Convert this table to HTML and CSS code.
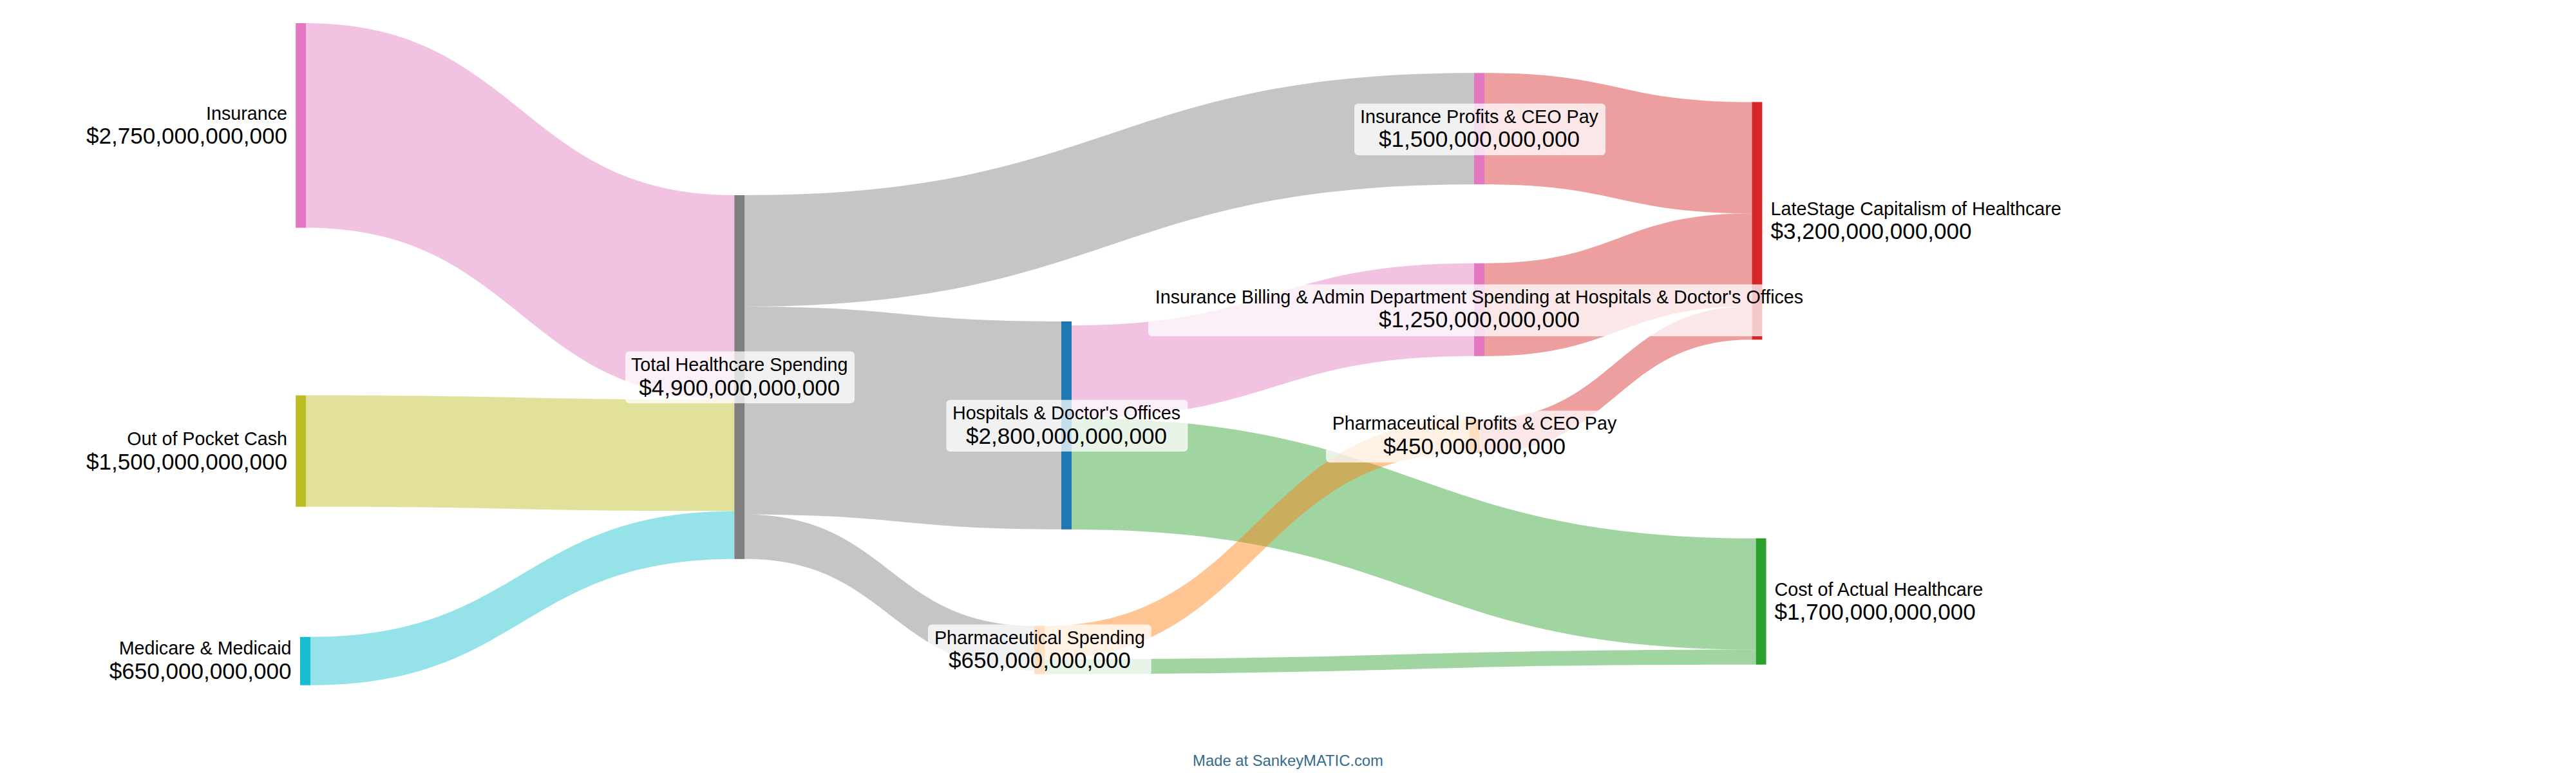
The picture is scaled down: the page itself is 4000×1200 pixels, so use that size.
FILE: index.html
```html
<!DOCTYPE html>
<html lang="en">
<head>
<meta charset="utf-8">
<title>Healthcare Spending Sankey</title>
<link rel="stylesheet" href="styles.css">
</head>
<body>
<div class="page">
  <svg class="sankey" width="4000" height="1161" viewBox="0 0 4000 1161" xmlns="http://www.w3.org/2000/svg">
    <g class="flows">
      <path class="flow pink" d="M475.2,36 C807.75,36 807.75,303 1140.3,303 L1140.3,620.6 C807.75,620.6 807.75,353.6 475.2,353.6 Z"/>
      <path class="flow olive" d="M475.2,613.8 C807.75,613.8 807.75,620.6 1140.3,620.6 L1140.3,793.5 C807.75,793.5 807.75,786.7 475.2,786.7 Z"/>
      <path class="flow cyan" d="M482,988.8 C811.15,988.8 811.15,793.5 1140.3,793.5 L1140.3,867.8 C811.15,867.8 811.15,1063.7 482,1063.7 Z"/>
      <path class="flow gray" d="M1156.3,303 C1722.65,303 1722.65,113.3 2289,113.3 L2289,286.2 C1722.65,286.2 1722.65,475.9 1156.3,475.9 Z"/>
      <path class="flow gray" d="M1156.3,475.9 C1402.15,475.9 1402.15,499 1648,499 L1648,821.8 C1402.15,821.8 1402.15,798.7 1156.3,798.7 Z"/>
      <path class="flow gray" d="M1156.3,798.7 C1381.15,798.7 1381.15,971.5 1606,971.5 L1606,1040.7 C1381.15,1040.7 1381.15,867.8 1156.3,867.8 Z"/>
      <path class="flow pink" d="M1664,505 C1976.5,505 1976.5,408.7 2289,408.7 L2289,552.8 C1976.5,552.8 1976.5,649.1 1664,649.1 Z"/>
      <path class="flow green" d="M1664,649.1 C2195.25,649.1 2195.25,835.7 2726.5,835.7 L2726.5,1008.6 C2195.25,1008.6 2195.25,822 1664,822 Z"/>
      <path class="flow orange" d="M1622,971.5 C1951.75,971.5 1951.75,651 2281.5,651 L2281.5,702.9 C1951.75,702.9 1951.75,1023.4 1622,1023.4 Z"/>
      <path class="flow green" d="M1622,1023.4 C2174.25,1023.4 2174.25,1008.6 2726.5,1008.6 L2726.5,1031.7 C2174.25,1031.7 2174.25,1046.4 1622,1046.4 Z"/>
      <path class="flow red" d="M2305,113.3 C2512.7,113.3 2512.7,158.4 2720.4,158.4 L2720.4,331.3 C2512.7,331.3 2512.7,286.2 2305,286.2 Z"/>
      <path class="flow red" d="M2305,408.7 C2512.7,408.7 2512.7,331.3 2720.4,331.3 L2720.4,475.4 C2512.7,475.4 2512.7,552.8 2305,552.8 Z"/>
      <path class="flow red" d="M2297.5,651 C2508.95,651 2508.95,475.4 2720.4,475.4 L2720.4,527.3 C2508.95,527.3 2508.95,702.9 2297.5,702.9 Z"/>
    </g>
    <g class="nodes">
      <rect class="node n-pink" x="459.2" y="36" width="16" height="317.6"/>
      <rect class="node n-olive" x="459.2" y="613.8" width="16" height="172.9"/>
      <rect class="node n-cyan" x="466" y="988.8" width="16" height="74.9"/>
      <rect class="node n-gray" x="1140.3" y="303" width="16" height="564.8"/>
      <rect class="node n-blue" x="1648" y="499" width="16" height="322.8"/>
      <rect class="node n-orange" x="1606" y="971.5" width="16" height="74.9"/>
      <rect class="node n-pink" x="2289" y="113.3" width="16" height="172.9"/>
      <rect class="node n-pink" x="2289" y="408.7" width="16" height="144.1"/>
      <rect class="node n-orange" x="2281.5" y="651" width="16" height="51.9"/>
      <rect class="node n-red" x="2720.4" y="158.4" width="16" height="368.9"/>
      <rect class="node n-green" x="2726.5" y="835.7" width="16" height="196"/>
    </g>
    <g class="labels">
      <text class="lbl end" x="446"><tspan class="name" x="446" y="185.8">Insurance</tspan><tspan class="value" x="446" y="223.3">$2,750,000,000,000</tspan></text>
      <text class="lbl end" x="446"><tspan class="name" x="446" y="691.2">Out of Pocket Cash</tspan><tspan class="value" x="446" y="728.7">$1,500,000,000,000</tspan></text>
      <text class="lbl end" x="452.5"><tspan class="name" x="452.5" y="1015.8">Medicare &amp; Medicaid</tspan><tspan class="value" x="452.5" y="1053.8">$650,000,000,000</tspan></text>

      <rect class="hl" x="971" y="545.6" width="356" height="80.4" rx="6"/>
      <text class="lbl mid"><tspan class="name" x="1148.3" y="576.3">Total Healthcare Spending</tspan><tspan class="value" x="1148.3" y="613.8">$4,900,000,000,000</tspan></text>

      <rect class="hl" x="1469.4" y="620.7" width="375" height="80.3" rx="6"/>
      <text class="lbl mid"><tspan class="name" x="1656" y="651.3">Hospitals &amp; Doctor's Offices</tspan><tspan class="value" x="1656" y="688.8">$2,800,000,000,000</tspan></text>

      <rect class="hl" x="1441" y="969.6" width="346.7" height="79.4" rx="6"/>
      <text class="lbl mid"><tspan class="name" x="1614.4" y="1000">Pharmaceutical Spending</tspan><tspan class="value" x="1614.4" y="1037">$650,000,000,000</tspan></text>

      <rect class="hl" x="2103" y="160.7" width="390" height="80.3" rx="6"/>
      <text class="lbl mid"><tspan class="name" x="2297" y="190.6">Insurance Profits &amp; CEO Pay</tspan><tspan class="value" x="2297" y="228">$1,500,000,000,000</tspan></text>

      <rect class="hl" x="1783" y="441.6" width="1029" height="80.4" rx="6"/>
      <text class="lbl mid"><tspan class="name" x="2297" y="470.7">Insurance Billing &amp; Admin Department Spending at Hospitals &amp; Doctor's Offices</tspan><tspan class="value" x="2297" y="507.8">$1,250,000,000,000</tspan></text>

      <rect class="hl" x="2059" y="637.5" width="461" height="80.4" rx="6"/>
      <text class="lbl mid"><tspan class="name" x="2289.5" y="667.3">Pharmaceutical Profits &amp; CEO Pay</tspan><tspan class="value" x="2289.5" y="705">$450,000,000,000</tspan></text>

      <text class="lbl start"><tspan class="name" x="2749.5" y="333.7">LateStage Capitalism of Healthcare</tspan><tspan class="value" x="2749.5" y="371">$3,200,000,000,000</tspan></text>
      <text class="lbl start"><tspan class="name" x="2755.6" y="924.5">Cost of Actual Healthcare</tspan><tspan class="value" x="2755.6" y="962">$1,700,000,000,000</tspan></text>
    </g>
  </svg>
  <div class="credit">Made at SankeyMATIC.com</div>
</div>
</body>
</html>
```

FILE: styles.css
```css
html, body {
  margin: 0;
  padding: 0;
  background: #ffffff;
}

.page {
  width: 4000px;
  display: flex;
  flex-direction: column;
}

.sankey {
  display: block;
}

.flow {
  fill-opacity: 0.45;
  stroke: none;
}

.flow.pink { fill: #e377c2; }
.flow.olive { fill: #bcbd22; }
.flow.cyan { fill: #17becf; }
.flow.gray { fill: #7f7f7f; }
.flow.green { fill: #2ca02c; }
.flow.orange { fill: #ff7f0e; }
.flow.red { fill: #d62728; }

.node { stroke: none; }
.n-pink { fill: #e377c2; }
.n-olive { fill: #bcbd22; }
.n-cyan { fill: #17becf; }
.n-gray { fill: #7f7f7f; }
.n-blue { fill: #1f77b4; }
.n-orange { fill: #ff7f0e; }
.n-red { fill: #d62728; }
.n-green { fill: #2ca02c; }

.hl {
  fill: #ffffff;
  fill-opacity: 0.75;
}

.lbl {
  font-family: "Liberation Sans", Arial, sans-serif;
  fill: #000000;
}

.lbl.end { text-anchor: end; }
.lbl.mid { text-anchor: middle; }
.lbl.start { text-anchor: start; }

.lbl .name { font-size: 28.7px; }
.lbl .value { font-size: 35.1px; }

.credit {
  height: 39px;
  line-height: 39px;
  text-align: center;
  font-family: "Liberation Sans", Arial, sans-serif;
  font-size: 23.8px;
  color: #356b8c;
}
```
